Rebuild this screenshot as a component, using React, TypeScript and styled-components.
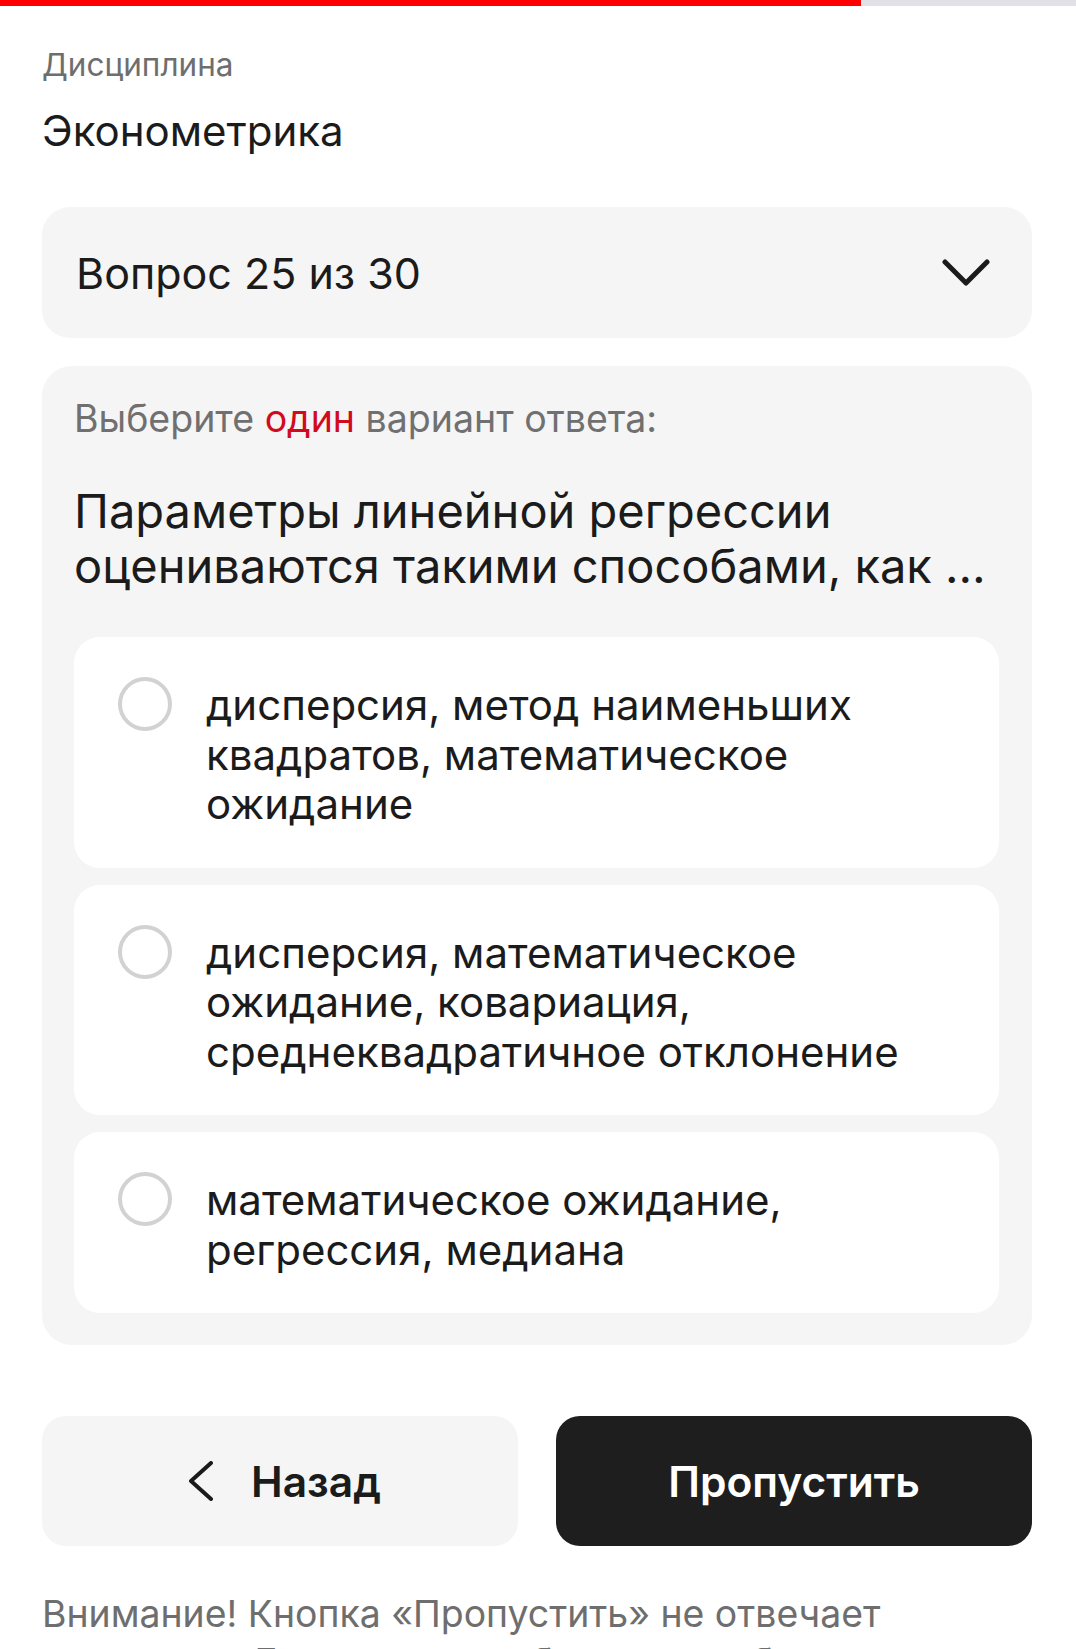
import React from "react";
import styled, { createGlobalStyle } from "styled-components";

const Global = createGlobalStyle`
  html, body { margin: 0; padding: 0; background: #ffffff; }
  body { font-family: "Inter", "Noto Sans", sans-serif; color: #1b1b1b; -webkit-font-smoothing: antialiased; }
  * { box-sizing: border-box; }
`;

const Progress = styled.div`
  height: 6px;
  background: #e1e1e7;
`;

const ProgressFill = styled.div`
  height: 100%;
  background: #ff0000;
`;

const Page = styled.main`
  padding: 0 44px 0 42px;
  display: flex;
  flex-direction: column;
`;

const Label = styled.div`
  margin-top: 40px;
  font-size: 31.5px;
  line-height: 38px;
  color: #6e6e6e;
`;

const Discipline = styled.div`
  margin-top: 23px;
  font-size: 42px;
  line-height: 48px;
  color: #1b1b1b;
`;

const Dropdown = styled.button`
  margin-top: 52px;
  height: 131px;
  width: 100%;
  border: 0;
  border-radius: 28px;
  background: #f5f5f5;
  padding: 0 42px 0 34px;
  display: flex;
  align-items: center;
  justify-content: space-between;
  font: inherit;
  font-size: 43px;
  color: #1b1b1b;
  cursor: pointer;
`;

const Card = styled.section`
  margin-top: 28px;
  background: #f5f5f5;
  border-radius: 30px;
  padding: 30px 33px 32px 32px;
  display: flex;
  flex-direction: column;
`;

const Hint = styled.div`
  font-size: 37.5px;
  line-height: 46px;
  color: #707070;
`;

const Accent = styled.span`
  color: #d20a1e;
`;

const Question = styled.h2`
  margin: 41px 0 44px;
  font-weight: 400;
  font-size: 47px;
  line-height: 55px;
  color: #1b1b1b;
`;

const Options = styled.div`
  display: flex;
  flex-direction: column;
  gap: 17px;
`;

const Option = styled.label`
  background: #ffffff;
  border-radius: 26px;
  padding: 43px 34px 39px 44px;
  display: flex;
  align-items: flex-start;
  gap: 34px;
  cursor: pointer;
`;

const Radio = styled.span`
  flex: none;
  width: 54px;
  height: 54px;
  margin-top: -3px;
  border-radius: 50%;
  border: 4.5px solid #d2d2d2;
`;

const OptionText = styled.span`
  font-size: 42px;
  line-height: 49.5px;
  color: #1b1b1b;
`;

const Buttons = styled.div`
  margin-top: 71px;
  display: grid;
  grid-template-columns: 1fr 1fr;
  gap: 38px;
`;

const Button = styled.button<{ $dark?: boolean }>`
  height: 130px;
  border: 0;
  border-radius: 24px;
  background: ${(p) => (p.$dark ? "#1e1e1e" : "#f5f5f5")};
  color: ${(p) => (p.$dark ? "#ffffff" : "#1b1b1b")};
  display: flex;
  align-items: center;
  justify-content: center;
  gap: 36px;
  font: inherit;
  font-size: 42.5px;
  font-weight: 600;
  cursor: pointer;
`;

const Warning = styled.p`
  margin: 44px 0 0;
  max-width: 880px;
  font-size: 37.4px;
  line-height: 48px;
  color: #6e6e6e;
`;

const Chevron = ({ dir }: { dir: "down" | "left" }) =>
  dir === "down" ? (
    <svg width="48" height="28" viewBox="0 0 48 28" fill="none">
      <path d="M3 3 L24 24 L45 3" stroke="#1b1b1b" strokeWidth="5" strokeLinecap="round" strokeLinejoin="round" />
    </svg>
  ) : (
    <svg width="36" height="40" viewBox="0 0 36 40" fill="none">
      <path d="M32 2 L12 20 L32 38" stroke="#1b1b1b" strokeWidth="4" strokeLinecap="round" strokeLinejoin="round" />
    </svg>
  );

const options = [
  "дисперсия, метод наименьших квадратов, математическое ожидание",
  "дисперсия, математическое ожидание, ковариация, среднеквадратичное отклонение",
  "математическое ожидание, регрессия, медиана",
];

export default function App() {
  return (
    <>
      <Global />
      <Progress>
        <ProgressFill style={{ width: `${(24 / 30) * 100}%` }} />
      </Progress>
      <Page>
        <Label>Дисциплина</Label>
        <Discipline>Эконометрика</Discipline>
        <Dropdown>
          <span>Вопрос 25 из 30</span>
          <Chevron dir="down" />
        </Dropdown>
        <Card>
          <Hint>
            Выберите <Accent>один</Accent> вариант ответа:
          </Hint>
          <Question>Параметры линейной регрессии оцениваются такими способами, как&nbsp;…</Question>
          <Options>
            {options.map((o) => (
              <Option key={o}>
                <Radio />
                <OptionText>{o}</OptionText>
              </Option>
            ))}
          </Options>
        </Card>
        <Buttons>
          <Button>
            <Chevron dir="left" />
            <span>Назад</span>
          </Button>
          <Button $dark>Пропустить</Button>
        </Buttons>
        <Warning>
          Внимание! Кнопка «Пропустить» не отвечает на вопрос. Для ответа необходимо выбрать один вариант
        </Warning>
      </Page>
    </>
  );
}
